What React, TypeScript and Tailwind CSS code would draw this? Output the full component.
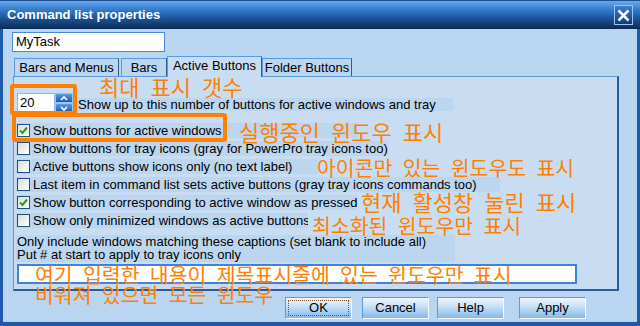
const rows = [
  { label: "Show buttons for active windows", checked: true, w: "w-[342px]" },
  { label: "Show buttons for tray icons (gray for PowerPro tray icons too)", checked: false, w: "w-[372px]" },
  { label: "Active buttons show icons only (no text label)", checked: false, w: "w-[302px]" },
  { label: "Last item in command list sets active buttons (gray tray icons commands too)", checked: false, w: "w-[484px]" },
  { label: "Show button corresponding to active window as pressed", checked: true, w: "w-[341px]" },
  { label: "Show only minimized windows as active buttons", checked: false, w: "w-[292px]" },
];

const Checkbox = ({ checked }: { checked: boolean }) => (
  <div className="ml-[1px] flex h-[13px] w-[13px] shrink-0 items-center justify-center border border-[#1c5180] bg-[linear-gradient(135deg,#dcdcd4,#ffffff)]">
    {checked && (
      <svg width="9" height="9" viewBox="0 0 9 9">
        <path d="M1 4.5 L3.5 7 L8 1.5" stroke="#21a121" strokeWidth="2" fill="none" />
      </svg>
    )}
  </div>
);

const Button = ({ text, focus = false, className = "" }: { text: string; focus?: boolean; className?: string }) => (
  <div
    className={`relative flex h-[22px] w-[67px] items-center justify-center border border-t-[#5c9ae0] border-l-[#5c9ae0] border-r-[#f2f8ff] border-b-[#f2f8ff] bg-[linear-gradient(to_bottom,#eef6fe,#c6def6_45%,#84b8ea)] leading-[20px] ${className}`}
  >
    {text}
    {focus && <div className="absolute inset-[2px] border border-dotted border-[#7a4f2a]" />}
  </div>
);

const Tab = ({ text, w, active = false }: { text: string; w: string; active?: boolean }) =>
  active ? (
    <div className={`relative z-10 flex h-[21px] items-start justify-center border-l border-t border-r border-l-[#5a9ae0] border-t-[#5a9ae0] border-r-[#2a5aa0] bg-[#c9ddf2] pt-[1px] leading-[15px] ${w}`}>
      {text}
    </div>
  ) : (
    <div className={`mb-[1px] flex h-[18px] items-start justify-center border-l border-t border-r border-l-[#5a9ae0] border-t-[#5a9ae0] border-r-[#2a5aa0] bg-[#bcd6f0] pt-[1px] leading-[15px] ${w}`}>
      {text}
    </div>
  );

// orange note written over the screenshot; words spaced half an em apart
const Note = ({ text, className }: { text: string; className: string }) => (
  <div
    className={`absolute flex gap-[0.5em] whitespace-nowrap font-['Noto_Sans_CJK_KR',sans-serif] leading-none text-[#ff8000] ${className}`}
  >
    {text.split(" ").map((w, i) => (
      <span key={i}>{w}</span>
    ))}
  </div>
);

export default function App() {
  return (
    <div className="relative flex h-[326px] w-[640px] flex-col overflow-hidden bg-[#b9d5f0] font-['Liberation_Sans',Arial,sans-serif] text-[13px] text-black">
      {/* title bar */}
      <div className="flex h-[29px] shrink-0 items-center justify-between border-t border-[#1d4f8f] bg-[linear-gradient(to_bottom,#6fa8ea_0%,#3b84d8_25%,#1f5ca8_55%,#0b2a52_100%)] pl-[7px] pr-[7px]">
        <span className="text-[13px] font-bold text-white">Command list properties</span>
        <div className="flex h-[20px] w-[19px] items-center justify-center border border-[#9cc4ee] bg-[linear-gradient(to_bottom,#3b80d0,#113a70)]">
          <svg width="13" height="13" viewBox="0 0 13 13">
            <path d="M1.5 1.5 L11.5 11.5 M11.5 1.5 L1.5 11.5" stroke="#ffffff" strokeWidth="2.5" />
          </svg>
        </div>
      </div>

      {/* body */}
      <div className="flex flex-1 flex-col border-x-[3px] border-b-[4px] border-[#1f5aa8]">
        <div className="ml-[9px] mt-[3px] h-[20px] w-[153px] border border-[#4a8ad8] bg-white pl-[3px] leading-[18px]">
          MyTask
        </div>

        <div className="mb-[-1px] ml-[11px] mt-[4px] flex h-[21px] items-end">
          <Tab text="Bars and Menus" w="w-[105px]" />
          <div className="w-[2px]" />
          <Tab text="Bars" w="w-[46px]" />
          <Tab text="Active Buttons" w="w-[95px]" active />
          <Tab text="Folder Buttons" w="w-[90px]" />
        </div>

        <div className="ml-[10px] flex h-[215px] w-[606px] flex-col border-l border-t border-r-2 border-b-2 border-l-[#5a9ae0] border-t-[#5a9ae0] border-r-[#2a5aa0] border-b-[#2a5aa0] bg-[#c9ddf2]">
          {/* spinner */}
          <div className="ml-[3px] mt-[16px] flex items-start">
            <div className="h-[20px] w-[38px] border border-[#8ab8e8] bg-white pl-[2px] leading-[18px]">20</div>
            <div className="flex h-[20px] w-[18px] flex-col">
              <div className="flex h-[10px] items-center justify-center border border-[#9cc4ee] bg-[linear-gradient(to_bottom,#5b9be6,#1f5aa8)]">
                <svg width="8" height="5" viewBox="0 0 8 5">
                  <path d="M1 4 L4 1 L7 4" stroke="#fff" strokeWidth="1.6" fill="none" />
                </svg>
              </div>
              <div className="flex h-[10px] items-center justify-center border border-[#9cc4ee] bg-[linear-gradient(to_bottom,#5b9be6,#1f5aa8)]">
                <svg width="8" height="5" viewBox="0 0 8 5">
                  <path d="M1 1 L4 4 L7 1" stroke="#fff" strokeWidth="1.6" fill="none" />
                </svg>
              </div>
            </div>
            <div className="ml-[3px] mt-[5px] h-[13px] w-[377px] whitespace-nowrap bg-[#bcd6f0] pl-[2px] leading-[13px]">
              Show up to this number of buttons for active windows and tray
            </div>
          </div>

          {/* checkboxes */}
          <div className="ml-[2px] mt-[10px] flex flex-col gap-[3px]">
            {rows.map((r) => (
              <div key={r.label} className={`flex h-[15px] items-center bg-[#bcd6f0] ${r.w}`}>
                <Checkbox checked={r.checked} />
                <span className="ml-[3px] overflow-hidden whitespace-nowrap leading-[15px]">{r.label}</span>
              </div>
            ))}
          </div>

          <div className="ml-[2px] mt-[7px] h-[27px] w-[439px] bg-[#bcd6f0] pl-[1px] leading-[13px]">
            <div>Only include windows matching these captions (set blank to include all)</div>
            <div>Put # at start to apply to tray icons only</div>
          </div>

          <div className="ml-[3px] mt-[2px] h-[20px] w-[560px] border-2 border-[#3f82d6] bg-white" />
        </div>

        <div className="ml-[282px] mt-[6px] flex">
          <Button text="OK" focus />
          <Button text="Cancel" className="ml-[10px]" />
          <Button text="Help" className="ml-[8px]" />
          <Button text="Apply" className="ml-[15px]" />
        </div>
      </div>

      {/* annotations */}
      <div className="absolute left-[10px] top-[84px] h-[31px] w-[67px] rounded-[3px] border-4 border-[#ff8000]" />
      <div className="absolute left-[12px] top-[113px] h-[29px] w-[215px] rounded-[3px] border-4 border-[#ff8000]" />
      <Note text="최대 표시 갯수" className="left-[99px] top-[75px] text-[22px]" />
      <Note text="실행중인 윈도우 표시" className="left-[239px] top-[120px] text-[22px]" />
      <Note text="아이콘만 있는 윈도우도 표시" className="left-[317px] top-[157px] text-[20.5px]" />
      <Note text="현재 활성창 눌린 표시" className="left-[361px] top-[190px] text-[22px]" />
      <Note text="최소화된 윈도우만 표시" className="left-[312px] top-[215px] text-[20.5px]" />
      <Note text="여기 입력한 내용이 제목표시줄에 있는 윈도우만 표시" className="left-[35px] top-[264px] text-[20.5px]" />
      <Note text="비워져 있으면 모든 윈도우" className="left-[35px] top-[284px] text-[20.5px]" />
    </div>
  );
}
